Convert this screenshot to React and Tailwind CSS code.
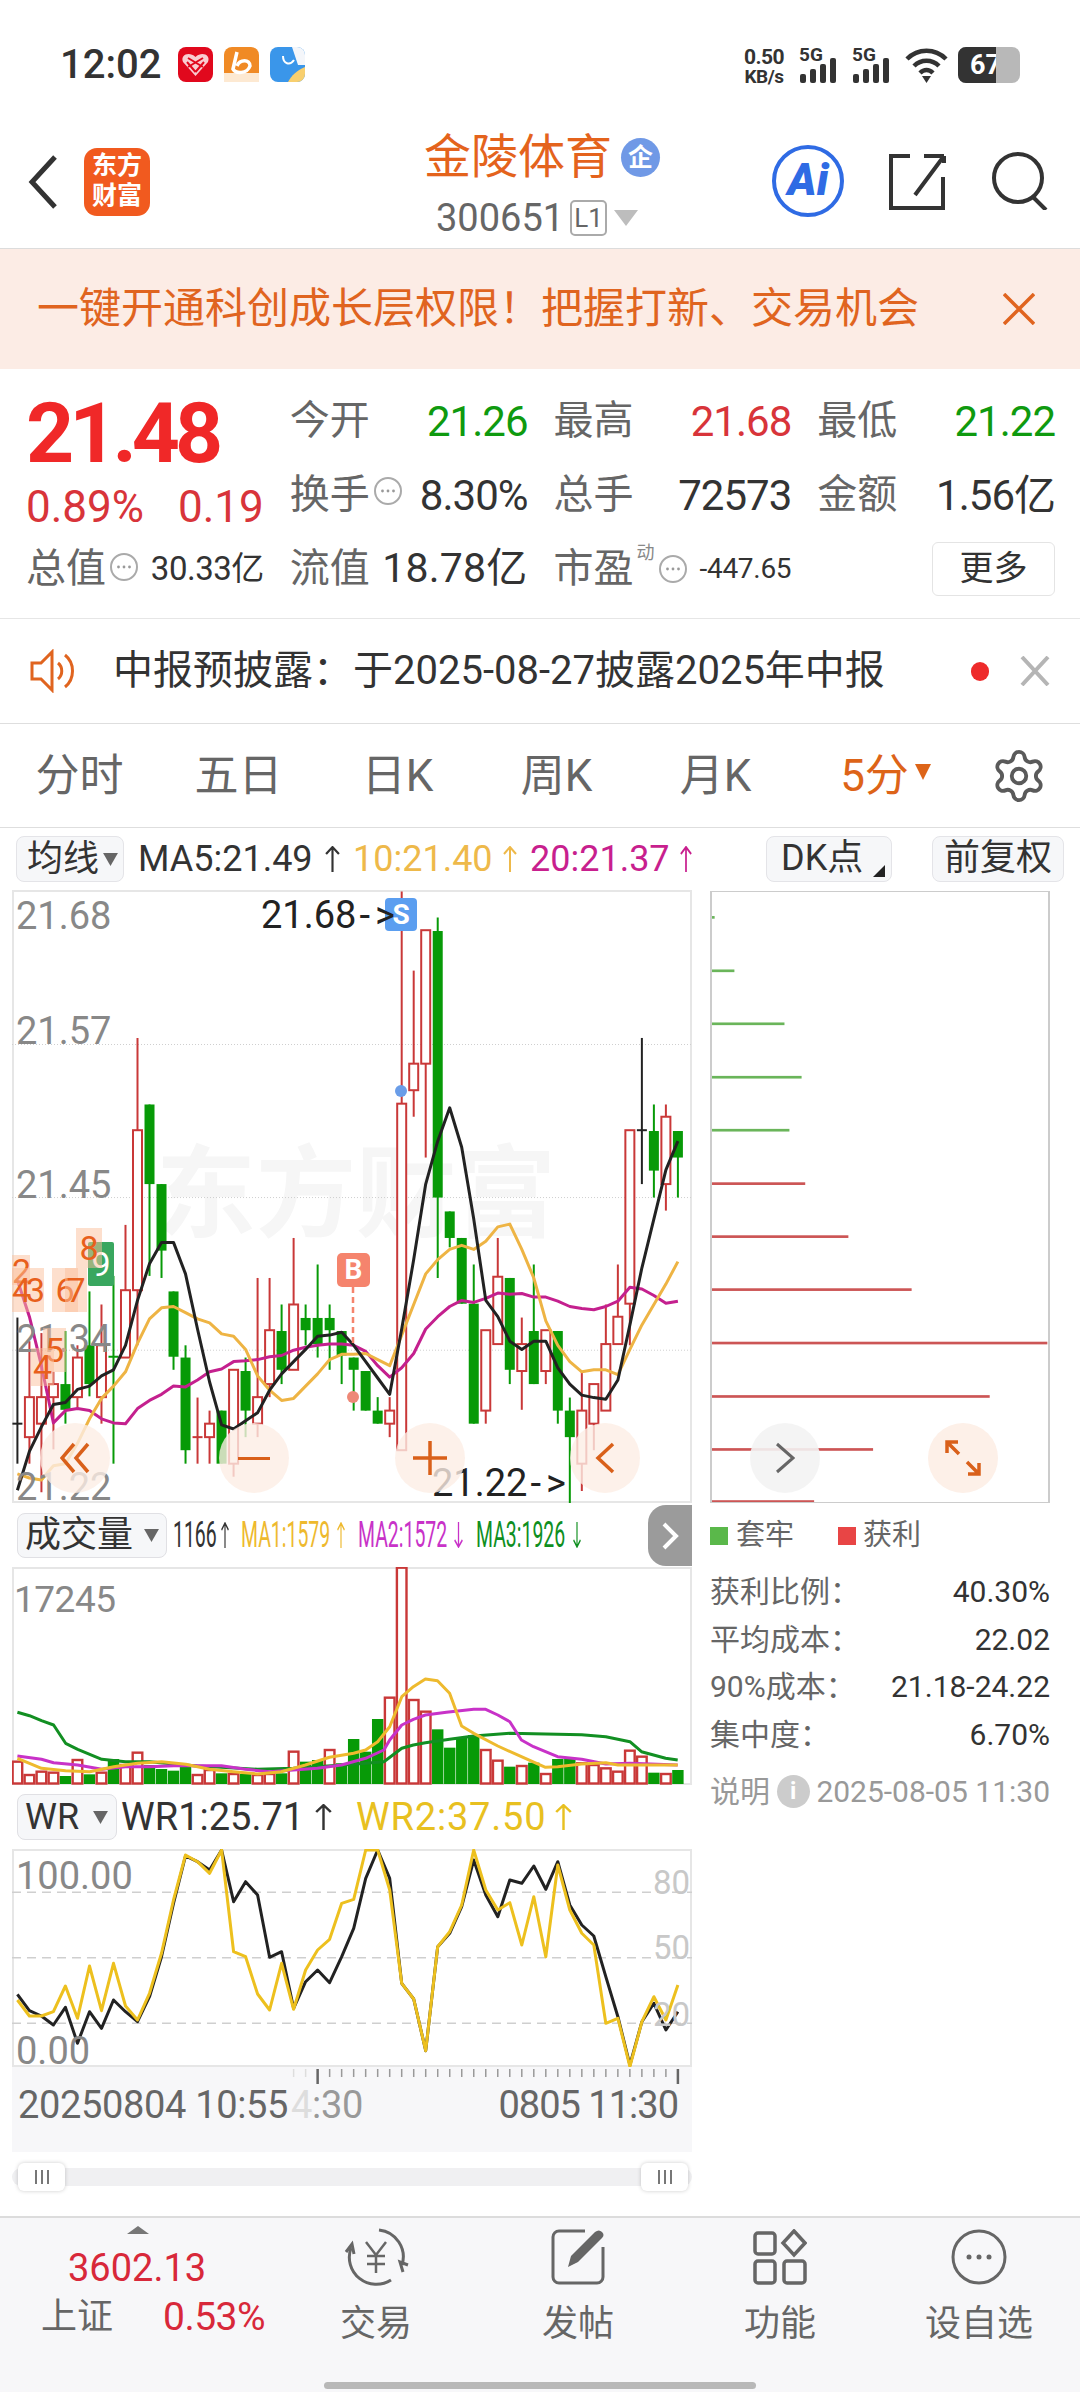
import { Settings } from "lucide-react";

const RED = "#c93838";
const GREEN = "#079a07";

// candles read off the chart: wick top, wick bottom, body top, body bottom, colour
const candles = [
  [1072, 1430, 1332, 1332, "k"], [1130, 1430, 1267, 1365, "r"], [1110, 1500, 1267, 1332, "r"], [1205, 1395, 1235, 1267, "r"],
  [1105, 1332, 1235, 1298, "g"], [1140, 1298, 1170, 1267, "r"], [1008, 1265, 1140, 1235, "g"], [1040, 1332, 1140, 1267, "r"],
  [970, 1430, 1168, 1168, "g"], [845, 1170, 1005, 1170, "r"], [387, 1140, 613, 1005, "r"], [550, 970, 550, 745, "g"],
  [745, 975, 745, 908, "g"], [1008, 1200, 1008, 1168, "g"], [1140, 1430, 1170, 1397, "g"], [1268, 1430, 1365, 1365, "r"],
  [1300, 1430, 1332, 1365, "r"], [1300, 1430, 1300, 1430, "g"], [1200, 1462, 1200, 1430, "r"], [1170, 1365, 1203, 1300, "g"],
  [975, 1365, 1267, 1332, "r"], [975, 1267, 1103, 1235, "r"], [1040, 1235, 1105, 1200, "g"], [877, 1200, 1040, 1200, "r"],
  [1040, 1140, 1073, 1103, "g"], [942, 1170, 1073, 1137, "g"], [1040, 1200, 1073, 1103, "g"], [1105, 1235, 1105, 1165, "g"],
  [1170, 1300, 1170, 1200, "g"], [1203, 1300, 1203, 1300, "g"], [1267, 1332, 1300, 1332, "g"], [1267, 1365, 1300, 1332, "r"],
  [28, 1397, 548, 1397, "r"], [222, 580, 450, 515, "r"], [123, 680, 123, 450, "r"], [92, 975, 125, 778, "g"],
  [812, 900, 812, 877, "g"], [877, 1038, 877, 1038, "g"], [942, 1332, 1038, 1332, "g"], [1103, 1332, 1103, 1300, "r"],
  [877, 1137, 972, 1137, "r"], [975, 1235, 975, 1200, "g"], [1072, 1298, 1137, 1203, "r"], [942, 1235, 1105, 1235, "g"],
  [1103, 1235, 1103, 1203, "r"], [1105, 1332, 1105, 1300, "g"], [1268, 1527, 1300, 1365, "g"], [1205, 1497, 1300, 1430, "r"],
  [1235, 1397, 1235, 1332, "r"], [1040, 1300, 1137, 1300, "r"], [942, 1137, 1070, 1137, "r"], [613, 1140, 613, 1038, "r"],
  [387, 745, 613, 613, "k"], [550, 778, 615, 712, "g"], [550, 810, 580, 745, "r"], [615, 778, 615, 680, "g"],
];
const ma5 = [1495, 1400, 1340, 1285, 1280, 1248, 1240, 1215, 1200, 1140, 1030, 940, 888, 888, 965, 1100, 1230, 1335, 1345, 1325, 1305, 1250, 1210, 1180, 1150, 1118, 1115, 1108, 1140, 1180, 1220, 1260, 1100, 930, 745, 640, 558, 655, 830, 1030, 1070, 1130, 1150, 1130, 1130, 1195, 1235, 1262, 1268, 1272, 1225, 1090, 950, 830, 710, 640];
const ma10 = [1455, 1465, 1470, 1435, 1430, 1380, 1320, 1270, 1240, 1205, 1135, 1075, 1048, 1045, 1060, 1075, 1085, 1112, 1118, 1150, 1215, 1250, 1275, 1270, 1240, 1210, 1175, 1162, 1162, 1160, 1175, 1190, 1115, 1040, 965, 930, 905, 895, 905, 885, 850, 843, 905, 975, 1080, 1140, 1180, 1205, 1200, 1200, 1212, 1150, 1090, 1040, 990, 935];
const ma20 = [980, 1070, 1190, 1330, 1300, 1295, 1300, 1320, 1330, 1332, 1295, 1275, 1260, 1240, 1242, 1225, 1205, 1198, 1180, 1178, 1175, 1168, 1165, 1152, 1145, 1140, 1137, 1137, 1140, 1155, 1190, 1218, 1195, 1160, 1100, 1070, 1045, 1030, 1035, 1025, 1012, 1015, 1013, 1022, 1022, 1032, 1045, 1050, 1053, 1045, 1032, 998, 1002, 1018, 1037, 1032];

const vols = [
  [785, "r"], [825, "r"], [815, "r"], [818, "r"], [828, "g"], [780, "r"], [823, "g"], [818, "r"], [777, "g"], [795, "r"], [758, "r"], [795, "g"], [807, "g"], [812, "g"],
  [795, "g"], [825, "r"], [810, "r"], [820, "g"], [822, "r"], [822, "g"], [825, "r"], [822, "r"], [820, "g"], [755, "r"], [785, "g"], [780, "g"], [750, "r"], [790, "g"],
  [717, "g"], [755, "g"], [657, "g"], [593, "r"], [203, "r"], [600, "r"], [635, "r"], [688, "g"], [743, "g"], [712, "g"], [705, "g"], [750, "r"], [782, "r"], [800, "g"],
  [798, "r"], [788, "g"], [822, "r"], [777, "g"], [777, "g"], [790, "r"], [795, "r"], [805, "r"], [815, "r"], [752, "r"], [770, "r"], [818, "g"], [822, "r"], [810, "g"],
];
const volYellow = [[39, 775], [66, 790], [93, 805], [147, 812], [201, 815], [255, 800], [308, 790], [362, 785], [416, 793], [469, 808], [523, 815], [577, 822], [630, 815], [684, 795], [738, 772], [792, 760], [819, 750], [846, 725], [873, 680], [900, 590], [926, 560], [953, 537], [980, 542], [1007, 580], [1034, 678], [1061, 700], [1115, 738], [1168, 770], [1222, 802], [1249, 800], [1303, 792], [1357, 788], [1384, 795], [1437, 795], [1518, 795]];
const volPurple = [[39, 768], [93, 778], [120, 788], [174, 795], [228, 808], [281, 800], [335, 800], [389, 797], [442, 797], [496, 797], [550, 808], [604, 815], [657, 810], [711, 805], [765, 795], [819, 775], [860, 750], [873, 720], [900, 675], [926, 658], [953, 645], [1000, 637], [1061, 628], [1088, 628], [1115, 645], [1142, 665], [1168, 720], [1195, 740], [1249, 770], [1303, 778], [1357, 792], [1411, 790], [1518, 795]];
const volGreen = [[39, 637], [66, 647], [93, 662], [120, 675], [147, 730], [174, 748], [228, 778], [281, 785], [335, 785], [389, 792], [442, 798], [496, 802], [577, 808], [657, 805], [711, 800], [765, 795], [819, 790], [860, 785], [900, 745], [926, 735], [953, 728], [1007, 718], [1061, 708], [1142, 700], [1222, 702], [1303, 704], [1357, 710], [1411, 725], [1437, 755], [1491, 775], [1518, 780]];

const wr1 = [583, 632, 648, 675, 622, 730, 635, 685, 600, 635, 665, 590, 470, 310, 168, 185, 210, 150, 305, 245, 285, 472, 455, 625, 545, 510, 548, 470, 385, 235, 150, 235, 550, 597, 752, 440, 400, 320, 180, 285, 350, 240, 250, 198, 268, 185, 315, 375, 408, 530, 650, 795, 665, 610, 690, 635];
const wr2 = [600, 648, 648, 635, 558, 655, 498, 632, 490, 618, 660, 580, 460, 300, 165, 185, 220, 150, 455, 470, 582, 630, 490, 628, 510, 450, 418, 310, 298, 150, 150, 270, 550, 597, 752, 440, 395, 315, 150, 270, 330, 308, 435, 290, 470, 195, 330, 400, 435, 670, 655, 800, 665, 590, 660, 555];

const chipBars = [[195, 100], [315, 160], [434, 312], [554, 364], [673, 327], [793, 375], [912, 506], [1031, 698], [1151, 1110], [1271, 935], [1390, 581], [1507, 402]];

const cx = (i) => (39 + i * 26.9) / 2.24;
const chartY = (y) => 880 + y / 2.45;
const volY = (y) => 1500 + y / 3;
const wrY = (y) => 1800 + y / 3;
const line = (arr, toY) => arr.map((y, i) => `${cx(i).toFixed(1)},${toY(y).toFixed(1)}`).join(" ");
const pairs = (arr) => arr.map(([x, y]) => `${(x / 2.24).toFixed(1)},${volY(y).toFixed(1)}`).join(" ");

function Dots({ className }) {
  return (
    <svg viewBox="0 0 30 30" className={`w-[30px] h-[30px] shrink-0 ${className}`}>
      <circle cx="15" cy="15" r="13" fill="none" stroke="#aaa" strokeWidth="2" />
      <circle cx="9.5" cy="15" r="1.4" fill="#999" />
      <circle cx="15" cy="15" r="1.4" fill="#999" />
      <circle cx="20.5" cy="15" r="1.4" fill="#999" />
    </svg>
  );
}

function Arrow({ down, w = "w-[14px]", className = "" }) {
  return (
    <svg viewBox="0 0 14 26" preserveAspectRatio="none" className={`${w} h-[26px] shrink-0 ${className}`} fill="none" stroke="currentColor" strokeWidth="2">
      {down ? <path d="M7 0 V25 M1 18 L7 25 L13 18" /> : <path d="M7 26 V1 M1 8 L7 1 L13 8" />}
    </svg>
  );
}

function Signal({ className }) {
  return (
    <div className={`relative w-[44px] h-[36px] ${className}`}>
      <span className="absolute left-0 top-0 text-[19px] leading-[15px] font-bold text-[#333]">5G</span>
      <svg viewBox="0 0 44 36" className="absolute inset-0 w-[44px] h-[36px]" fill="#333">
        <rect x="1" y="27" width="6" height="9" rx="2" />
        <rect x="11" y="22" width="6" height="14" rx="2" />
        <rect x="21" y="17" width="6" height="19" rx="2" />
        <rect x="31" y="11" width="6" height="25" rx="2" />
      </svg>
    </div>
  );
}

function StatusBar() {
  return (
    <div className="h-[120px] pt-[44px] pl-[60px] flex items-start">
      <span className="text-[40px] leading-[42px] font-medium text-[#333] w-[118px]">12:02</span>
      <div className="flex gap-[11px] mt-[3px]">
        <svg viewBox="0 0 35 35" className="w-[35px] h-[35px]">
          <rect width="35" height="35" rx="8" fill="#e1081d" />
          <path d="M17.5 29 L5 15 C2 8 11 4 17.5 10 C24 4 33 8 30 15 Z" fill="#fff" opacity=".8" />
          <path d="M17.5 25 L9 15 M17.5 25 L26 15 M10 11 L25 20 M25 11 L10 20" stroke="#e1081d" strokeWidth="2" />
        </svg>
        <svg viewBox="0 0 35 35" className="w-[35px] h-[35px]">
          <rect width="35" height="35" rx="8" fill="#f08a25" />
          <rect y="26" width="35" height="9" fill="#fde9d2" />
          <path d="M13 5 L9 22 C12 27 23 27 26 19 C26 12 16 12 13 19" fill="none" stroke="#fff" strokeWidth="3.5" />
        </svg>
        <svg viewBox="0 0 35 35" className="w-[35px] h-[35px]">
          <rect width="35" height="35" rx="8" fill="#3a96ea" />
          <path d="M22 0 H27 A8 8 0 0 1 35 8 V18 H28 Z" fill="#f4f6fa" />
          <path d="M18 35 C22 28 26 24 35 20 V27 A8 8 0 0 1 27 35 Z" fill="#f8cf6e" />
          <path d="M13 9 C13 17 20 19 24 13" fill="none" stroke="#fff" strokeWidth="2" />
        </svg>
      </div>
      <div className="ml-auto mr-[60px] flex items-start mt-[3px]">
        <div className="w-[54px] text-center text-[21px] leading-[20px] font-bold text-[#333] tracking-[-0.5px]">
          <div>0.50</div>
          <div className="text-[19px]">KB/s</div>
        </div>
        <Signal className="ml-[8px]" />
        <Signal className="ml-[9px]" />
        <svg viewBox="0 0 45 36" className="w-[45px] h-[36px] ml-[8px]">
          <path d="M3 12 C14 1 31 1 42 12" fill="none" stroke="#333" strokeWidth="4.5" />
          <path d="M10 19 C17 12 28 12 35 19" fill="none" stroke="#333" strokeWidth="4.5" />
          <path d="M16 26 C20 22 25 22 29 26" fill="none" stroke="#333" strokeWidth="4.5" />
          <path d="M18 29 H27 L22.5 36 Z" fill="#333" />
        </svg>
        <div className="relative w-[62px] h-[36px] ml-[9px] rounded-[8px] bg-[#b8b8b8] overflow-hidden">
          <div className="w-[38px] h-full bg-[#333] text-white text-[27px] leading-[36px] font-bold pl-[12px] overflow-hidden whitespace-nowrap">67</div>
        </div>
      </div>
    </div>
  );
}

function Header() {
  return (
    <div className="relative h-[129px] border-b border-[#dcdcdc] flex">
      <svg viewBox="0 0 30 54" className="absolute left-[28px] top-[35px] w-[30px] h-[54px]">
        <path d="M27 2 L4 27 L27 52" fill="none" stroke="#333" strokeWidth="5" />
      </svg>
      <div className="absolute left-[84px] top-[28px] w-[66px] h-[68px] rounded-[13px] bg-[#f15a1f] text-white font-bold text-[25px] leading-[30px] text-center pt-[3px]">
        <div>东方</div>
        <div>财富</div>
      </div>
      <div className="absolute left-[424px] top-[9px] flex items-start">
        <span className="text-[47px] leading-[56px] text-[#e4631c]">金陵体育</span>
        <span className="ml-[9px] mt-[9px] w-[39px] h-[39px] rounded-full bg-[#7099e6] text-white text-[25px] leading-[39px] text-center font-bold">企</span>
      </div>
      <div className="absolute left-[436px] top-[74px] flex items-center">
        <span className="text-[38px] leading-[48px] text-[#666]">300651</span>
        <span className="ml-[6px] w-[37px] h-[36px] border-2 border-[#aaa] rounded-[5px] text-[26px] leading-[32px] text-center text-[#666]">L1</span>
        <svg viewBox="0 0 24 16" className="w-[24px] h-[16px] ml-[7px]"><path d="M0 0 H24 L12 16 Z" fill="#bdbdbd" /></svg>
      </div>
      <div className="absolute left-[772px] top-[25px] w-[72px] h-[72px] rounded-full border-[4px] border-[#2f6be4] text-[#2f6be4] font-black italic text-[44px] leading-[62px] text-center">Ai</div>
      <svg viewBox="0 0 58 58" className="absolute left-[888px] top-[33px] w-[58px] h-[58px]" fill="none" stroke="#333" strokeWidth="4">
        <path d="M22 3 H3 V55 H55 V24" />
        <path d="M56 3 H36 M56 3 V10 M56 3 L27 42" />
      </svg>
      <svg viewBox="0 0 58 58" className="absolute left-[991px] top-[32px] w-[58px] h-[58px]" fill="none" stroke="#333" strokeWidth="4">
        <circle cx="27" cy="26" r="24" />
        <path d="M42 45 L55 58" />
      </svg>
    </div>
  );
}

function Banner() {
  return (
    <div className="h-[120px] bg-[#fcece5] flex items-center pl-[37px] pr-[45px] justify-between">
      <span className="text-[42px] leading-[50px] text-[#e0641f] whitespace-nowrap">一键开通科创成长层权限！把握打新、交易机会</span>
      <svg viewBox="0 0 32 32" className="w-[32px] h-[32px]" fill="none" stroke="#e0641f" strokeWidth="3.5">
        <path d="M1 1 L31 31 M31 1 L1 31" />
      </svg>
    </div>
  );
}

function Stat({ label, value, color = "text-[#333]", dots }) {
  return (
    <div className="flex items-center justify-between h-[74px]">
      <div className="flex items-center">
        <span className="text-[40px] text-[#666]">{label}</span>
        {dots && <Dots className="ml-[3px] -mt-[8px]" />}
      </div>
      <span className={`text-[42px] tracking-[-1px] ${color}`}>{value}</span>
    </div>
  );
}

function Quote() {
  return (
    <div className="h-[250px] border-b border-[#e6e6e6] pt-[15px] pl-[26px] pr-[25px] grid grid-cols-4 gap-x-[26px] content-start">
      <div className="row-span-2">
        <div className="text-[84px] leading-[64px] mt-[18px] font-bold text-[#f02828] tracking-[-5px]">21.48</div>
        <div className="flex justify-between mt-[21px] text-[44px] leading-[40px] text-[#d8343a]">
          <span>0.89%</span>
          <span>0.19</span>
        </div>
      </div>
      <Stat label="今开" value="21.26" color="text-[#0f9a0f]" />
      <Stat label="最高" value="21.68" color="text-[#d8343a]" />
      <Stat label="最低" value="21.22" color="text-[#0f9a0f]" />
      <Stat label="换手" value="8.30%" dots />
      <Stat label="总手" value="72573" />
      <Stat label="金额" value="1.56亿" />
      <div className="flex items-center h-[74px]">
        <span className="text-[40px] text-[#666]">总值</span>
        <Dots className="ml-[3px] -mt-[4px]" />
        <span className="ml-auto text-[33px] tracking-[-0.5px] text-[#333]">30.33亿</span>
      </div>
      <div className="flex items-center justify-between h-[74px]">
        <span className="text-[40px] text-[#666]">流值</span>
        <span className="text-[41px] tracking-[0.2px] text-[#333]">18.78亿</span>
      </div>
      <div className="flex items-center justify-between h-[74px]">
        <div className="flex items-center">
          <span className="text-[40px] text-[#666]">市盈</span>
          <span className="text-[18px] text-[#888] -mt-[34px] ml-[3px]">动</span>
          <Dots className="ml-[3px]" />
        </div>
        <span className="text-[28px] tracking-[-0.3px] text-[#333]">-447.65</span>
      </div>
      <div className="flex items-center justify-end h-[74px]">
        <span className="w-[123px] h-[54px] border border-[#e4e4e4] rounded-[6px] text-[34px] leading-[50px] text-center text-[#333]">更多</span>
      </div>
    </div>
  );
}

function Notice() {
  return (
    <div className="h-[105px] border-b border-[#dedede] flex items-center pl-[30px] relative">
      <svg viewBox="0 0 50 44" className="w-[50px] h-[44px]" fill="none" stroke="#e0641f" strokeWidth="3">
        <path d="M2 14 H11 L22 3 V41 L11 30 H2 Z" />
        <path d="M28 14 C33 18 33 26 28 30" />
        <path d="M35 6 C45 14 45 30 35 38" />
      </svg>
      <span className="ml-[33px] text-[40px] leading-[48px] text-[#333] whitespace-nowrap">中报预披露：于2025-08-27披露2025年中报</span>
      <span className="ml-auto mr-[31px] w-[18px] h-[19px] rounded-full bg-[#ee2b2b]" />
      <svg viewBox="0 0 30 30" className="w-[30px] h-[30px] mr-[30px]" fill="none" stroke="#b5b5b5" strokeWidth="4">
        <path d="M2 1 L28 29 M28 1 L2 29" />
      </svg>
    </div>
  );
}

function Tabs() {
  const tabs = ["分时", "五日", "日K", "周K", "月K"];
  return (
    <div className="h-[104px] border-b border-[#dedede] flex items-center text-[44px] text-[#666]">
      {tabs.map((t) => (
        <span key={t} className="w-[159px] text-center">{t}</span>
      ))}
      <span className="w-[159px] flex items-center justify-center text-[#dd6418] pl-[22px]">
        5分
        <svg viewBox="0 0 16 16" className="w-[16px] h-[16px] ml-[6px] -mt-[8px]"><path d="M0 0 H16 L8 16 Z" fill="#dd6418" /></svg>
      </span>
      <Settings className="ml-[36px]" size={58} strokeWidth={1.6} color="#5a5a5a" />
    </div>
  );
}

function Caret({ className = "" }) {
  return (
    <svg viewBox="0 0 16 14" className={`w-[15px] h-[13px] shrink-0 ${className}`}><path d="M0 0 H16 L8 14 Z" fill="#666" /></svg>
  );
}

function Toolbar() {
  return (
    <div className="h-[62px] flex items-center pl-[16px] text-[36px] whitespace-nowrap">
      <div className="w-[108px] h-[46px] bg-[#f6f7f9] border border-[#e4e4e8] rounded-[8px] flex items-center pl-[10px] text-[#333]">
        均线<Caret className="ml-[4px]" />
      </div>
      <span className="ml-[14px] w-[187px] text-[#333]">MA5:21.49</span>
      <Arrow w="w-[15px]" className="text-[#333]" />
      <span className="ml-[13px] w-[150px] text-[#eeb94a]">10:21.40</span>
      <Arrow className="text-[#eeb94a]" />
      <span className="ml-[13px] w-[150px] text-[#c81f8e]">20:21.37</span>
      <Arrow w="w-[12px]" className="text-[#c81f8e]" />
      <div className="ml-[74px] relative w-[126px] h-[46px] bg-[#f6f7f9] border border-[#e4e4e8] rounded-[8px] pl-[14px] leading-[42px] text-[#333]">
        DK点
        <svg viewBox="0 0 12 12" className="absolute right-[6px] bottom-[4px] w-[12px] h-[12px]"><path d="M12 0 V12 H0 Z" fill="#222" /></svg>
      </div>
      <div className="ml-[40px] w-[132px] h-[46px] bg-[#f6f7f9] border border-[#e4e4e8] rounded-[8px] leading-[42px] text-center text-[#333]">前复权</div>
    </div>
  );
}

function Circle({ className, children }) {
  return (
    <div className={`absolute w-[70px] h-[70px] rounded-full bg-[#fdeee5]/80 flex items-center justify-center ${className}`}>
      {children}
    </div>
  );
}

const ORANGE = "#d9601a";

function MainChart() {
  return (
    <div className="relative h-[613px] w-[680px] ml-[12px] ring-2 ring-inset ring-[#e6e6e6]">
      <span className="absolute left-[144px] top-[250px] text-[100px] leading-[110px] font-bold text-[#f6f6f6] whitespace-nowrap">东方财富</span>
      <svg viewBox="12 890 680 613" className="absolute inset-0 w-[680px] h-[613px]">
        {[403, 778, 1152].map((y) => (
          <line key={y} x1="12" x2="692" y1={chartY(y)} y2={chartY(y)} stroke="#cfcfcf" strokeDasharray="1 2" />
        ))}
        {candles.map(([wt, wb, bt, bb, c], i) => {
          const color = c === "r" ? RED : c === "g" ? GREEN : "#222";
          const x = cx(i);
          return (
            <g key={i}>
              <line x1={x} x2={x} y1={chartY(wt)} y2={chartY(wb)} stroke={color} strokeWidth="2" />
              {bt === bb ? (
                <line x1={x - 5} x2={x + 5} y1={chartY(bt)} y2={chartY(bt)} stroke={color} strokeWidth="2" />
              ) : c === "r" ? (
                <rect x={x - 4.5} y={chartY(bt)} width="9" height={chartY(bb) - chartY(bt)} fill="#fff" stroke={color} strokeWidth="2" />
              ) : (
                <rect x={x - 5} y={chartY(bt)} width="10" height={chartY(bb) - chartY(bt)} fill={color} />
              )}
            </g>
          );
        })}
        <polyline points={line(ma20, chartY)} fill="none" stroke="#c4208e" strokeWidth="3" strokeLinejoin="round" />
        <polyline points={line(ma10, chartY)} fill="none" stroke="#eeb444" strokeWidth="3" strokeLinejoin="round" />
        <polyline points={line(ma5, chartY)} fill="none" stroke="#222" strokeWidth="3" strokeLinejoin="round" />
        <line x1="353" x2="353" y1="1287" y2="1345" stroke="#f5846d" strokeWidth="2.5" strokeDasharray="6 4" />
        <circle cx="353" cy="1397" r="6" fill="#ee8877" />
        <circle cx="401" cy="1091" r="6" fill="#6a9de8" />
      </svg>

      {/* price labels on the left edge */}
      <span className="absolute left-[4px] top-[6px] text-[38px] leading-[40px] text-[#888]">21.68</span>
      <span className="absolute left-[4px] top-[121px] text-[38px] leading-[40px] text-[#888]">21.57</span>
      <span className="absolute left-[4px] top-[275px] text-[38px] leading-[40px] text-[#888]">21.45</span>
      <span className="absolute left-[4px] top-[429px] text-[38px] leading-[40px] text-[#888]">21.34</span>
      <span className="absolute left-[4px] top-[577px] text-[38px] leading-[40px] text-[#888]">21.22</span>

      <span className="absolute left-[373px] top-[8px] w-[32px] h-[33px] rounded-[4px] bg-[#5b9ef0] text-white text-[28px] leading-[33px] font-bold text-center">S</span>
      <span className="absolute left-[249px] top-[5px] text-[38px] leading-[40px] text-[#222] whitespace-nowrap">21.68<span className="ml-[3px] tracking-[5px]">-&gt;</span></span>
      <span className="absolute left-[420px] top-[573px] text-[38px] leading-[40px] text-[#222] whitespace-nowrap">21.22<span className="ml-[3px] tracking-[5px]">-&gt;</span></span>

      <span className="absolute left-[325px] top-[363px] w-[33px] h-[34px] rounded-[5px] bg-[#f5846d] text-white text-[28px] leading-[34px] font-bold text-center">B</span>
      <span className="absolute left-[76px] top-[352px] w-[26px] h-[44px] rounded-[2px] bg-[#39a75f] text-white text-[34px] leading-[44px] text-center">9</span>

      {/* translucent turn-count marks */}
      <span className="absolute left-0 top-[365px] w-[18px] h-[30px] bg-[#fbbf9b]/50 text-[#e8601c] text-[34px] leading-[32px]">2</span>
      <span className="absolute left-0 top-[378px] w-[32px] h-[44px] bg-[#fbbf9b]/50 text-[#e8601c] text-[34px] leading-[44px] text-right tracking-[-5px] pr-[4px]">43</span>
      <span className="absolute left-[40px] top-[378px] w-[26px] h-[44px] bg-[#fbbf9b]/50 text-[#e8601c] text-[34px] leading-[44px] text-center">6</span>
      <span className="absolute left-[53px] top-[378px] w-[22px] h-[44px] bg-[#fbbf9b]/50 text-[#e8601c] text-[34px] leading-[44px] text-center">7</span>
      <span className="absolute left-[64px] top-[338px] w-[26px] h-[40px] bg-[#fbbf9b]/50 text-[#e8601c] text-[34px] leading-[40px] text-center">8</span>
      <span className="absolute left-[31px] top-[438px] w-[23px] h-[44px] bg-[#fbbf9b]/50 text-[#e8601c] text-[34px] leading-[44px] text-center">5</span>
      <span className="absolute left-[19px] top-[458px] w-[23px] h-[38px] bg-[#fbbf9b]/50 text-[#e8601c] text-[34px] leading-[38px] text-center">4</span>

      <Circle className="left-[28px] top-[533px]">
        <svg viewBox="0 0 30 32" className="w-[30px] h-[32px]" fill="none" stroke={ORANGE} strokeWidth="3.5"><path d="M14 2 L2 16 L14 30 M28 2 L16 16 L28 30" /></svg>
      </Circle>
      <Circle className="left-[207px] top-[533px]">
        <div className="w-[32px] h-[3px] bg-[#d9601a]" />
      </Circle>
      <Circle className="left-[383px] top-[533px]">
        <svg viewBox="0 0 34 34" className="w-[34px] h-[34px]" fill="none" stroke={ORANGE} strokeWidth="3.5"><path d="M0 17 H34 M17 0 V34" /></svg>
      </Circle>
      <Circle className="left-[558px] top-[533px]">
        <svg viewBox="0 0 20 32" className="w-[20px] h-[32px]" fill="none" stroke={ORANGE} strokeWidth="3.5"><path d="M18 2 L3 16 L18 30" /></svg>
      </Circle>
    </div>
  );
}

// labels in this narrow strip are much tighter than any installed font
function Narrow({ w, children, className }) {
  return (
    <span className={`inline-block whitespace-nowrap ${w} ${className}`}>
      <span className="inline-block origin-left scale-x-[0.54]">{children}</span>
    </span>
  );
}

function VolumeHeader() {
  return (
    <div className="relative h-[64px] flex items-center pl-[17px] text-[36px] whitespace-nowrap">
      <div className="w-[150px] h-[45px] bg-[#f6f7f9] border border-[#e0e0e4] rounded-[8px] flex items-center pl-[7px] text-[36px] text-[#333]">
        成交量<Caret className="ml-[11px]" />
      </div>
      <Narrow w="w-[48px] ml-[6px]" className="text-[#333]">1166</Narrow>
      <Arrow w="w-[8px]" className="text-[#333]" />
      <Narrow w="w-[96px] ml-[12px]" className="text-[#eeb92e]">MA1:1579</Narrow>
      <Arrow w="w-[8px]" className="text-[#eeb92e]" />
      <Narrow w="w-[96px] ml-[13px]" className="text-[#c832c8]">MA2:1572</Narrow>
      <Arrow down w="w-[9px]" className="text-[#c832c8]" />
      <Narrow w="w-[97px] ml-[13px]" className="text-[#0f8f1f]">MA3:1926</Narrow>
      <Arrow down w="w-[8px]" className="text-[#0f8f1f]" />
      <div className="absolute left-[648px] top-[2px] w-[44px] h-[61px] rounded-l-[18px] bg-[#9b9b9b] flex items-center justify-center">
        <svg viewBox="0 0 18 28" className="w-[18px] h-[28px]" fill="none" stroke="#fff" strokeWidth="4"><path d="M3 2 L15 14 L3 26" /></svg>
      </div>
    </div>
  );
}

function VolumeChart() {
  return (
    <div className="relative h-[218px] w-[680px] ml-[12px] ring-2 ring-inset ring-[#e6e6e6] overflow-hidden">
      <svg viewBox="12 1567 680 218" className="absolute inset-0 w-[680px] h-[218px]">
        {vols.map(([top, c], i) => {
          const x = cx(i);
          const y = volY(top);
          return c === "r" ? (
            <rect key={i} x={x - 4.8} y={y} width="9.6" height={1783.5 - y} fill="#fff" stroke={RED} strokeWidth="2.4" />
          ) : (
            <rect key={i} x={x - 5.7} y={y} width="11.4" height={1784 - y} fill={GREEN} />
          );
        })}
        <polyline points={pairs(volGreen)} fill="none" stroke="#128f22" strokeWidth="3" strokeLinejoin="round" />
        <polyline points={pairs(volPurple)} fill="none" stroke="#c832c8" strokeWidth="3" strokeLinejoin="round" />
        <polyline points={pairs(volYellow)} fill="none" stroke="#eeba2e" strokeWidth="3" strokeLinejoin="round" />
      </svg>
      <span className="absolute left-[2px] top-[11px] text-[37px] leading-[44px] text-[#888] tracking-[-0.5px]">17245</span>
    </div>
  );
}

function WrHeader() {
  return (
    <div className="h-[64px] flex items-center pl-[17px] text-[38px] whitespace-nowrap">
      <div className="w-[100px] h-[46px] bg-[#f6f7f9] border border-[#e0e0e4] rounded-[8px] flex items-center pl-[7px] text-[36px] text-[#333]">
        WR<Caret className="ml-[14px]" />
      </div>
      <span className="ml-[4px] w-[194px] text-[#333]">WR1:25.71</span>
      <Arrow w="w-[17px]" className="text-[#333]" />
      <span className="ml-[24px] w-[199px] text-[#e8c020] tracking-[0.8px]">WR2:37.50</span>
      <Arrow w="w-[17px]" className="text-[#e8c020]" />
    </div>
  );
}

function WrChart() {
  return (
    <div className="relative h-[218px] w-[680px] ml-[12px] ring-2 ring-inset ring-[#e6e6e6] overflow-hidden">
      <svg viewBox="12 1849 680 218" className="absolute inset-0 w-[680px] h-[218px]">
        {[277, 473, 670].map((y) => (
          <line key={y} x1="12" x2="692" y1={wrY(y)} y2={wrY(y)} stroke="#cfcfcf" strokeWidth="1.5" strokeDasharray="9 6" />
        ))}
        <polyline points={line(wr1, wrY)} fill="none" stroke="#222" strokeWidth="3" strokeLinejoin="round" />
        <polyline points={line(wr2, wrY)} fill="none" stroke="#edc01e" strokeWidth="3" strokeLinejoin="round" />
      </svg>
      <span className="absolute left-[4px] top-[8px] text-[38px] leading-[38px] text-[#888]">100.00</span>
      <span className="absolute left-[4px] top-[183px] text-[38px] leading-[38px] text-[#888]">0.00</span>
      <span className="absolute right-[2px] top-[17px] text-[33px] leading-[34px] text-[#c8c8c8]">80</span>
      <span className="absolute right-[2px] top-[82px] text-[33px] leading-[34px] text-[#c8c8c8]">50</span>
      <span className="absolute right-[2px] top-[149px] text-[33px] leading-[34px] text-[#c8c8c8]">20</span>
    </div>
  );
}

function TimeAxis() {
  const ticks = Array.from({ length: 33 }, (_, i) => i + 23);
  return (
    <div className="relative h-[85px] w-[680px] ml-[12px] bg-[#f7f7f9]">
      <svg viewBox="12 2067 680 20" className="absolute left-0 top-0 w-[680px] h-[20px]">
        {ticks.map((i) => {
          const tall = i === 25 || i === 55;
          return (
            <line key={i} x1={cx(i)} x2={cx(i)} y1="2069" y2={tall ? 2084 : 2077} stroke={tall ? "#666" : i < 25 ? "#ddd" : "#999"} strokeWidth={tall ? 2.5 : 1.5} />
          );
        })}
      </svg>
      <div className="absolute left-[6px] top-[18px] text-[38px] leading-[40px] text-[#666] whitespace-nowrap tracking-[-0.35px]">
        20250804 10:55
        <span className="ml-[3px] text-[#999]"><span className="text-[#ddd]">4</span>:30</span>
      </div>
      <span className="absolute right-[14px] top-[18px] text-[38px] leading-[40px] text-[#666] tracking-[-1px]">0805 11:30</span>
    </div>
  );
}

function Handle({ className }) {
  return (
    <div className={`absolute top-[-5px] w-[47px] h-[28px] rounded-[6px] bg-white shadow-[0_0_4px_rgba(0,0,0,0.2)] flex items-center justify-center gap-[4px] ${className}`}>
      <span className="w-[2px] h-[14px] bg-[#777]" />
      <span className="w-[2px] h-[14px] bg-[#777]" />
      <span className="w-[2px] h-[14px] bg-[#777]" />
    </div>
  );
}

function Scrollbar() {
  return (
    <div className="h-[64px] pt-[16px]">
      <div className="relative h-[18px] w-[680px] ml-[12px] rounded-full bg-[#f0f0f2]">
        <Handle className="left-[6px]" />
        <Handle className="left-[629px]" />
      </div>
    </div>
  );
}

function ChipChart() {
  return (
    <div className="relative mt-[1px] h-[612px] w-[340px] border-x-2 border-y border-[#ccc]">
      <svg viewBox="92 138 1020 1370" preserveAspectRatio="none" className="absolute inset-0 w-full h-full">
        {chipBars.map(([y, end], i) => (
          <rect key={y} x="92" y={y - 3} width={end - 92} height="6" fill={i < 5 ? "#6ab55a" : "#cc5555"} />
        ))}
      </svg>
      <div className="absolute left-[38px] top-[531px] w-[70px] h-[70px] rounded-full bg-[#f3f3f3]/90 flex items-center justify-center">
        <svg viewBox="0 0 20 32" className="w-[20px] h-[32px]" fill="none" stroke="#666" strokeWidth="3"><path d="M2 2 L18 16 L2 30" /></svg>
      </div>
      <div className="absolute left-[216px] top-[531px] w-[70px] h-[70px] rounded-full bg-[#fdf0e8] flex items-center justify-center">
        <svg viewBox="0 0 36 36" className="w-[36px] h-[36px]" fill="none" stroke={ORANGE} strokeWidth="3.5">
          <path d="M2 13 V2 H13 M2 2 L14 14 M34 23 V34 H23 M34 34 L22 22" />
        </svg>
      </div>
    </div>
  );
}

function ChipStats() {
  const rows = [
    ["获利比例：", "40.30%"],
    ["平均成本：", "22.02"],
    ["90%成本：", "21.18-24.22"],
    ["集中度：", "6.70%"],
  ];
  return (
    <div className="w-[340px]">
      <div className="mt-[3px] h-[60px] flex items-center text-[29px] text-[#666]">
        <span className="w-[18px] h-[18px] bg-[#5ab84a]" />
        <span className="ml-[8px] w-[102px]">套牢</span>
        <span className="w-[18px] h-[18px] bg-[#e84545]" />
        <span className="ml-[7px]">获利</span>
      </div>
      <div className="mt-[2px]">
        {rows.map(([k, v]) => (
          <div key={k} className="h-[47.5px] flex items-center justify-between text-[30px]">
            <span className="text-[#666]">{k}</span>
            <span className="text-[#333]">{v}</span>
          </div>
        ))}
      </div>
      <div className="mt-[11px] flex items-center justify-between text-[30px] text-[#999]">
        <span>说明</span>
        <span className="w-[33px] h-[33px] rounded-full bg-[#ccc] text-white text-[24px] leading-[33px] text-center font-bold">i</span>
        <span>2025-08-05 11:30</span>
      </div>
    </div>
  );
}

function BottomItem({ label, w = "w-[202px]", children }) {
  return (
    <div className={`${w} flex flex-col items-center`}>
      <div className="h-[60px] flex items-center justify-center mt-[9px]">{children}</div>
      <span className="mt-[15px] text-[36px] leading-[44px] text-[#666]">{label}</span>
    </div>
  );
}

function BottomBar() {
  return (
    <div className="relative h-[176px] bg-[#f7f7f9] border-t-2 border-[#dcdcdc] flex">
      <div className="w-[275px] relative">
        <svg viewBox="0 0 22 8" className="absolute left-[127px] top-[8px] w-[22px] h-[8px]"><path d="M0 8 L11 0 L22 8 Z" fill="#777" /></svg>
        <span className="absolute left-[68px] top-[27px] text-[38px] leading-[46px] text-[#d8283a]">3602.13</span>
        <span className="absolute left-[41px] top-[77px] text-[36px] leading-[44px] text-[#666]">上证</span>
        <span className="absolute left-[163px] top-[77px] text-[39px] leading-[44px] text-[#d8283a] tracking-[-0.5px]">0.53%</span>
      </div>
      <BottomItem label="交易">
        <svg viewBox="0 0 66 58" className="w-[66px] h-[58px]" fill="none" stroke="#666" strokeWidth="3">
          <path d="M36 2 A27 27 0 0 1 59 37 M48 52 A27 27 0 0 1 8 20" />
          <path d="M3 24 L9 16 L11 26 M60 44 L57 34 L65 37" />
          <path d="M23 14 L33 27 L43 14 M33 27 V45 M24 28 H42 M24 36 H42" strokeWidth="2.5" />
        </svg>
      </BottomItem>
      <BottomItem label="发帖">
        <svg viewBox="0 0 54 56" className="w-[54px] h-[56px]" fill="none" stroke="#666" strokeWidth="3">
          <path d="M34 2 H8 A6 6 0 0 0 2 8 V48 A6 6 0 0 0 8 54 H46 A6 6 0 0 0 52 48 V18" />
          <path d="M17 38 L20 27 L44 3 Q48 0 51 3 Q54 6 51 9 L27 33 Z" fill="#666" stroke="none" />
        </svg>
      </BottomItem>
      <BottomItem label="功能">
        <svg viewBox="0 0 54 56" className="w-[54px] h-[56px]" fill="none" stroke="#666" strokeWidth="3.5">
          <rect x="2" y="4" width="20" height="21" rx="3" />
          <rect x="2" y="32" width="20" height="22" rx="3" />
          <rect x="31" y="32" width="21" height="22" rx="3" />
          <path d="M41 2 L52 14 L41 26 L30 14 Z" />
        </svg>
      </BottomItem>
      <BottomItem label="设自选" w="w-[196px]">
        <svg viewBox="0 0 56 58" className="w-[56px] h-[58px]">
          <circle cx="28" cy="29" r="26" fill="none" stroke="#666" strokeWidth="3" />
          <circle cx="18" cy="29" r="2.5" fill="#666" />
          <circle cx="28" cy="29" r="2.5" fill="#666" />
          <circle cx="38" cy="29" r="2.5" fill="#666" />
        </svg>
      </BottomItem>
      <div className="absolute left-[324px] top-[164px] w-[432px] h-[7px] rounded-full bg-[#b8b8b8]" />
    </div>
  );
}

export default function App() {
  return (
    <div className="w-[1080px] h-[2392px] bg-white overflow-hidden font-[Roboto,'Noto_Sans_CJK_SC',sans-serif]">
      <StatusBar />
      <Header />
      <Banner />
      <Quote />
      <Notice />
      <Tabs />
      <Toolbar />
      <div className="h-[1326px] flex">
        <div className="w-[710px]">
          <MainChart />
          <VolumeHeader />
          <VolumeChart />
          <WrHeader />
          <WrChart />
          <TimeAxis />
          <Scrollbar />
        </div>
        <div className="w-[340px]">
          <ChipChart />
          <ChipStats />
        </div>
      </div>
      <BottomBar />
    </div>
  );
}
